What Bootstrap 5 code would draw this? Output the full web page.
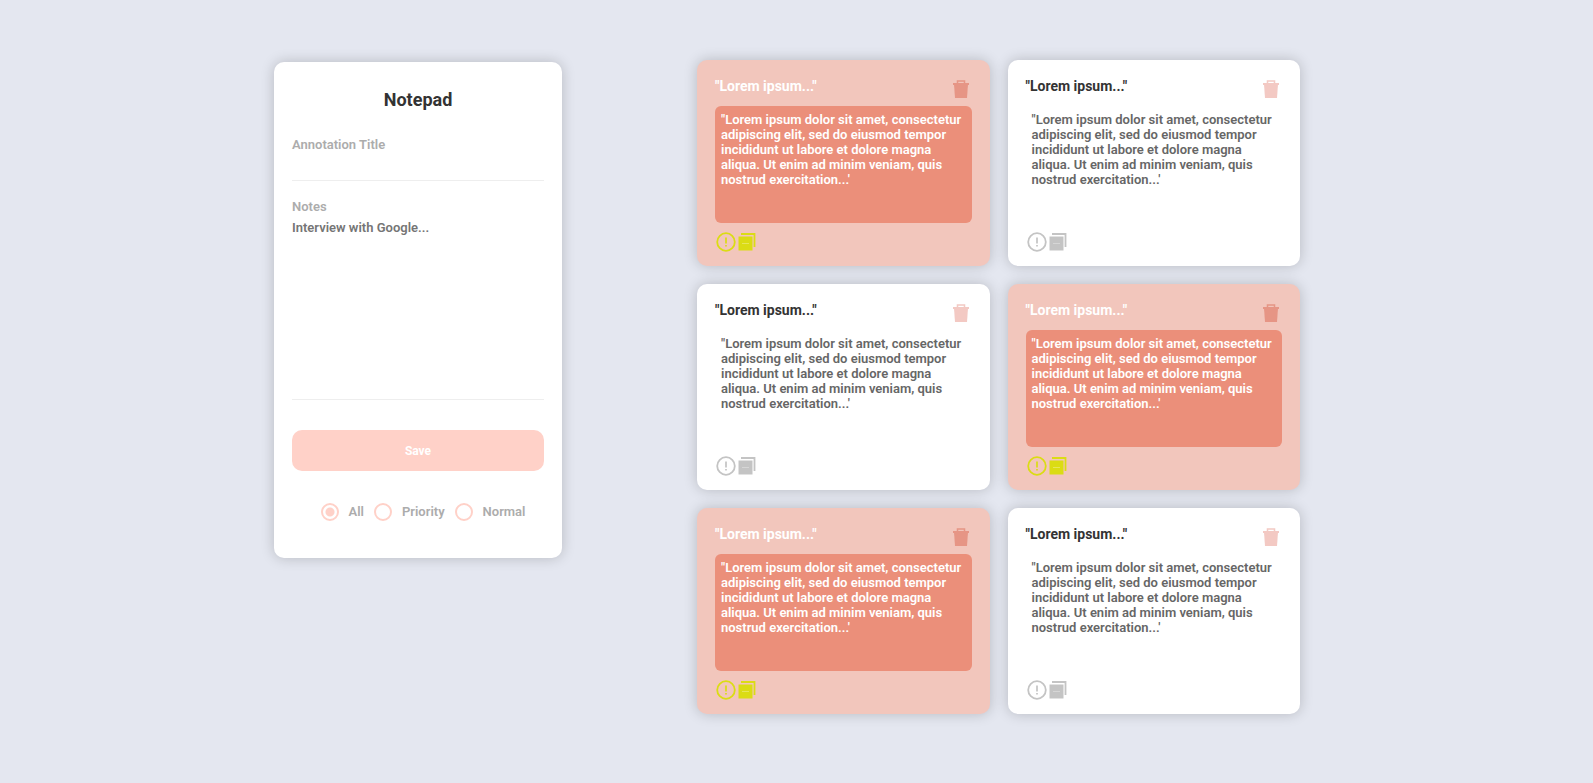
<!DOCTYPE html>
<html lang="en">
<head>
<meta charset="utf-8">
<meta name="viewport" content="width=device-width, initial-scale=1">
<title>Notepad</title>
<link href="https://cdn.jsdelivr.net/npm/bootstrap@5.3.0/dist/css/bootstrap.min.css" rel="stylesheet">
<style>
  body { background: #e4e7f0; font-family: Roboto, sans-serif; font-size: 13px; font-weight: 600; color: #666; }
  .app-shell { padding: 60px 0; column-gap: 135px; row-gap: 36px; }
  .panel { border: 0; border-radius: 10px; box-shadow: 0 0 14px rgba(0, 0, 0, .2); }
  .sidebar { flex: 0 1 288px; margin-top: 2px; padding: 27px 18px 37px; }
  .sidebar h1 { font-size: 18px; line-height: 21px; font-weight: 700; color: #333; margin-bottom: 27px; }
  .field-label { color: #acacac; line-height: 15px; }
  .sidebar .form-control { border: 0; border-bottom: 1px solid #eee; border-radius: 0; padding: 0; font-size: 13px; line-height: 15px; font-weight: 600; color: #666; resize: none; box-shadow: none; background: none; }
  .title-input { height: 29px; margin-bottom: 18px; }
  .notes-input { height: 180px; margin: 6px 0 30px; }
  .notes-input::placeholder { color: #757575; opacity: 1; }
  .btn-save { height: 41px; border: 0; border-radius: 10px; background: #ffd1c8; color: #fff; font-size: 12px; font-weight: 700; }
  .btn-save:hover { background: #eb8f7a; color: #fff; }
  .filters { margin-top: 32px; padding-left: 10px; gap: 10px; color: #acacac; line-height: 18px; }
  .filters label { gap: 10px; }
  .filters input { appearance: none; width: 18px; height: 18px; margin: 0; border: 2px solid #ffd1c8; border-radius: 50%; }
  .filters input:checked { background: radial-gradient(circle, #ffd1c8 4px, transparent 5px); }
  .notes-list { flex: 0 1 622px; padding-right: 19px; }
  .notes-list .row { --bs-gutter-x: 18px; row-gap: 18px; }
  .note { padding: 18px 18px 14px; }
  .note h2 { font-size: 14px; line-height: 16px; font-weight: 700; color: #333; margin: 0; }
  .note-head { height: 28px; }
  .note textarea { height: 117px; border: 0; border-radius: 6px; padding: 6px; resize: none; font-size: 13px; line-height: 15px; font-weight: 600; color: #666; background: transparent; outline: 0; overflow: hidden; }
  .icon-btn { padding: 0; border: 0; line-height: 0; background: none; color: inherit; }
  .icon-btn svg { display: block; }
  .trash { color: #e89488; opacity: .5; margin: 1px 1px 0 0; }
  .note-tools { margin-top: 9px; color: #c4c4c4; }
  .note.priority { background: #f2c6bc; }
  .note.priority h2, .note.priority textarea { color: #fff; }
  .note.priority textarea { background: #eb8f7a; }
  .note.priority .note-tools { color: #dbdc14; }
  .note.priority .trash { color: #e07c68; opacity: .65; }
</style>
</head>
<body>
<svg class="d-none" aria-hidden="true">
  <symbol id="i-trash" viewBox="0 0 20 20">
    <path d="M3 5h14l-1 14H4z" fill="currentColor"/>
    <path d="M6.500 4.500V2h7v2.500" fill="none" stroke="currentColor" stroke-width="1.500"/>
    <path d="M2 5h16" stroke="currentColor" stroke-width="2"/>
  </symbol>
  <symbol id="i-alert" viewBox="0 0 20 20">
    <circle cx="10" cy="10" r="8.800" fill="none" stroke="currentColor" stroke-width="1.800"/>
    <path d="M10 5.500v6M10 13v1.600" stroke="currentColor" stroke-width="1.700"/>
  </symbol>
  <symbol id="i-stack" viewBox="0 0 20 20">
    <path d="M1.500 4.500h14v14h-14z" fill="currentColor"/>
    <path d="M4 2h13.500v13" fill="none" stroke="currentColor" stroke-width="1.800"/>
    <path d="M5 11.500h7" stroke="#fff" stroke-opacity=".3"/>
  </symbol>
</svg>

<div class="app-shell d-flex flex-wrap justify-content-center align-items-start">
  <aside class="card panel sidebar">
    <h1 class="text-center">Notepad</h1>
    <form>
      <label class="field-label d-block" for="title">Annotation Title</label>
      <input class="form-control title-input" id="title" type="text">
      <label class="field-label d-block" for="notes">Notes</label>
      <textarea class="form-control notes-input" id="notes" placeholder="Interview with Google..."></textarea>
      <button class="btn btn-save w-100 d-block" type="submit">Save</button>
    </form>
    <div class="filters d-flex justify-content-center">
      <label class="d-flex align-items-center"><input type="radio" name="filter" checked>All</label>
      <label class="d-flex align-items-center"><input type="radio" name="filter">Priority</label>
      <label class="d-flex align-items-center"><input type="radio" name="filter">Normal</label>
    </div>
  </aside>

  <main class="notes-list">
    <div class="row row-cols-1 row-cols-sm-2" id="notesRow"></div>
  </main>
</div>

<template id="noteTemplate">
  <div class="col">
    <article class="card panel note">
      <div class="note-head d-flex justify-content-between align-items-start">
        <h2>"Lorem ipsum..."</h2>
        <button class="icon-btn trash" type="button" aria-label="Delete"><svg width="20" height="20"><use href="#i-trash"/></svg></button>
      </div>
      <textarea class="w-100" aria-label="Note text" readonly>"Lorem ipsum dolor sit amet, consectetur adipiscing elit, sed do eiusmod tempor incididunt ut labore et dolore magna aliqua. Ut enim ad minim veniam, quis nostrud exercitation...'</textarea>
      <div class="note-tools d-flex">
        <button class="icon-btn" type="button" aria-label="Priority"><svg width="22" height="20"><use href="#i-alert"/></svg></button>
        <button class="icon-btn" type="button" aria-label="Collapse"><svg width="20" height="20"><use href="#i-stack"/></svg></button>
      </div>
    </article>
  </div>
</template>
<script>
  const row = document.getElementById('notesRow');
  const template = document.getElementById('noteTemplate');
  [true, false, false, true, true, false].forEach(priority => {
    const note = template.content.cloneNode(true);
    note.querySelector('.note').classList.toggle('priority', priority);
    row.append(note);
  });
</script>
<script src="https://cdn.jsdelivr.net/npm/bootstrap@5.3.0/dist/js/bootstrap.bundle.min.js"></script>
</body>
</html>
